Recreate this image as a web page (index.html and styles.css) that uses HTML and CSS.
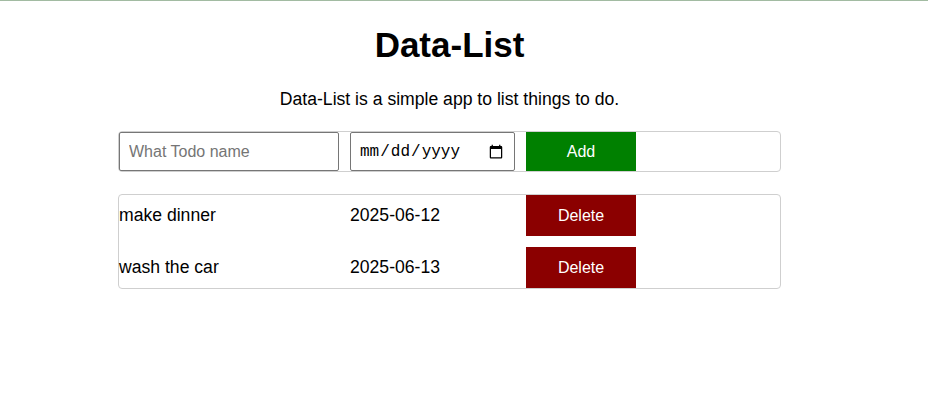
FILE: index.html
```html
<!DOCTYPE html>
<html lang="en">
<head>
<meta charset="utf-8">
<title>Data-List</title>
<link rel="stylesheet" href="styles.css">
</head>
<body>
<main class="app">
  <h1 class="title">Data-List</h1>
  <p class="subtitle">Data-List is a simple app to list things to do.</p>
  <form class="panel form-row">
    <input class="field name-field" type="text" placeholder="What Todo name">
    <input class="field date-field" type="date">
    <button class="btn btn-add" type="button">Add</button>
  </form>
  <ul class="panel todo-list">
    <li class="todo-row">
      <span class="todo-name">make dinner</span>
      <span class="todo-date">2025-06-12</span>
      <button class="btn btn-delete" type="button">Delete</button>
    </li>
    <li class="todo-row">
      <span class="todo-name">wash the car</span>
      <span class="todo-date">2025-06-13</span>
      <button class="btn btn-delete" type="button">Delete</button>
    </li>
  </ul>
</main>
</body>
</html>
```
FILE: styles.css
```css
html {
  border-top: 1px solid #a2bba2;
  background: #fff;
}
body {
  margin: 0;
  font-family: "Liberation Sans", Arial, sans-serif;
  color: #000;
}
.app {
  width: 663px;
  margin-left: 118px;
  padding-top: 24px;
  box-sizing: border-box;
}
.title {
  margin: 0;
  text-align: center;
  font-size: 35px;
  font-weight: bold;
  line-height: 39px;
}
.subtitle {
  margin: 25px 0 21px;
  text-align: center;
  font-size: 17.6px;
  line-height: 21px;
}
.panel {
  border: 1px solid #cfcfcf;
  border-radius: 4px;
  margin: 0;
  padding: 0;
  list-style: none;
}
.form-row {
  display: flex;
  gap: 11px;
  align-items: stretch;
}
.field {
  box-sizing: border-box;
  height: 39px;
  border: 1px solid #767676;
  border-radius: 2px;
  margin: 0;
  background: #fff;
}
.name-field {
  width: 220px;
  padding: 0 9px;
  font-family: "Liberation Sans", Arial, sans-serif;
  font-size: 16px;
}
.name-field::placeholder {
  color: #757575;
}
.date-field {
  width: 165px;
  padding: 0 8px;
  font-family: "Liberation Mono", "Courier New", monospace;
  font-size: 16px;
  color: #000;
}
.btn {
  width: 110px;
  border: none;
  margin: 0;
  color: #fff;
  font-family: "Liberation Sans", Arial, sans-serif;
  font-size: 16px;
  cursor: pointer;
}
.btn-add {
  height: 39px;
  background: #008000;
}
.todo-list {
  margin-top: 22px;
  display: flex;
  flex-direction: column;
  gap: 11px;
}
.todo-row {
  display: flex;
  align-items: center;
  gap: 11px;
  height: 41px;
  font-size: 17.6px;
}
.todo-name {
  width: 220px;
}
.todo-date {
  width: 165px;
}
.btn-delete {
  height: 41px;
  background: #8b0000;
}
```
